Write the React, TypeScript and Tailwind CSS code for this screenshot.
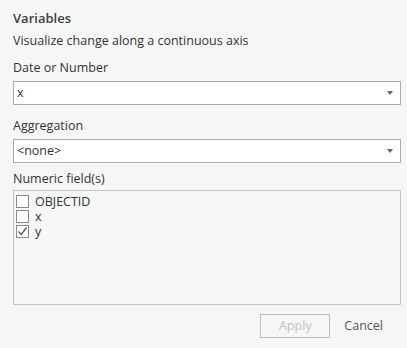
import React from "react";

const fields = [
  { name: "OBJECTID", checked: false },
  { name: "x", checked: false },
  { name: "y", checked: true },
];

function Select({ value }: { value: string }) {
  return (
    <div className="flex h-[24px] items-center justify-between border border-[#ababab] bg-white pl-[3px] pr-[7px] text-[12.5px] text-[#333]">
      <span>{value}</span>
      <svg width="6" height="4" viewBox="0 0 6 4">
        <path d="M0 0h6L3 4z" fill="#666" />
      </svg>
    </div>
  );
}

function Checkbox({ checked }: { checked: boolean }) {
  return (
    <span className="flex h-[13px] w-[13px] shrink-0 items-center justify-center border border-[#8a8a8a] bg-white">
      {checked && (
        <svg width="11" height="11" viewBox="0 0 11 11">
          <path d="M1.5 5.5l2.8 3L9.5 1.5" fill="none" stroke="#555" strokeWidth="1.3" />
        </svg>
      )}
    </span>
  );
}

export default function App() {
  return (
    <div
      className="flex h-[348px] w-[407px] flex-col bg-[#f5f7f7] pl-[13px] pr-[6px] pt-[8px] text-[#333]"
      style={{ fontFamily: '"Open Sans", "Noto Sans", sans-serif' }}
    >
      <h1 className="text-[13px] font-semibold leading-[20px] text-[#3c3c3c]">Variables</h1>
      <p className="mt-[5px] text-[12.5px] leading-[16px]">Visualize change along a continuous axis</p>

      <label className="mt-[11px] text-[12.5px] leading-[16px]">Date or Number</label>
      <div className="mt-[5px]">
        <Select value="x" />
      </div>

      <label className="mt-[13px] text-[12.5px] leading-[16px]">Aggregation</label>
      <div className="mt-[5px]">
        <Select value="<none>" />
      </div>

      <label className="mt-[8px] text-[12.5px] leading-[16px]">Numeric field(s)</label>
      <div className="mt-[3px] flex h-[115px] flex-col border border-[#c4c4c4] pl-[2px] pt-[3px]">
        {fields.map((f) => (
          <div key={f.name} className="flex h-[15px] items-center gap-[6px] text-[12.5px] leading-[14px]">
            <Checkbox checked={f.checked} />
            <span>{f.name}</span>
          </div>
        ))}
      </div>

      <div className="mt-[9px] flex items-center justify-end gap-[14px] pr-[18px]">
        <button className="h-[24px] w-[70px] border border-[#bdbdbd] text-[12.5px] text-[#c2c2c2]">
          Apply
        </button>
        <span className="text-[12.5px] text-[#555]">Cancel</span>
      </div>
    </div>
  );
}
